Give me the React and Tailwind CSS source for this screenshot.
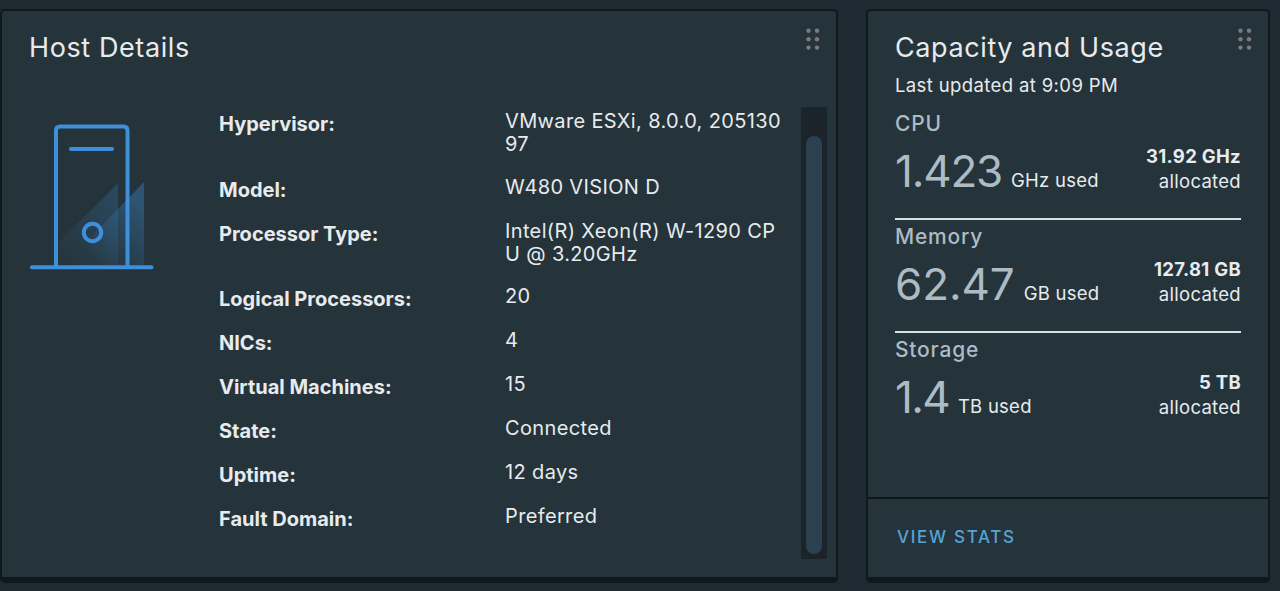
import clsx from 'clsx';

const details = [
  { label: 'Hypervisor:', lines: ['VMware ESXi, 8.0.0, 205130', '97'] },
  { label: 'Model:', lines: ['W480 VISION D'] },
  { label: 'Processor Type:', lines: ['Intel(R) Xeon(R) W-1290 CP', 'U @ 3.20GHz'] },
  { label: 'Logical Processors:', lines: ['20'] },
  { label: 'NICs:', lines: ['4'] },
  { label: 'Virtual Machines:', lines: ['15'] },
  { label: 'State:', lines: ['Connected'] },
  { label: 'Uptime:', lines: ['12 days'] },
  { label: 'Fault Domain:', lines: ['Preferred'] },
];

const usage = [
  { name: 'CPU', used: '1.423', unit: 'GHz', total: '31.92 GHz', tracking: 'tracking-[-1.2px]' },
  { name: 'Memory', used: '62.47', unit: 'GB', total: '127.81 GB', tracking: 'tracking-[-0.1px]' },
  { name: 'Storage', used: '1.4', unit: 'TB', total: '5 TB', tracking: 'tracking-[-1.7px]' },
];

function Card({ className, children }) {
  return (
    <section
      className={clsx(
        'flex h-[574px] flex-col rounded-[5px] border-2 border-b-[6px] border-[#11181c] bg-[#25333a]',
        className
      )}
    >
      {children}
    </section>
  );
}

function CardHeader({ title }) {
  return (
    <header className="flex h-[54px] justify-between pt-[17px] pr-[16px] pl-[27px]">
      <h2 className="pt-0.5 text-[27px] leading-9 tracking-[0.6px]">{title}</h2>
      <DragHandle />
    </header>
  );
}

function DragHandle() {
  return (
    <svg width="14" height="22" viewBox="0 0 14 22" fill="#7b7b7b" className="shrink-0">
      {[2.5, 11].map((x) =>
        [2.8, 11.2, 19.6].map((y) => <circle key={`${x}-${y}`} cx={x} cy={y} r="2.2" />)
      )}
    </svg>
  );
}

function HostIcon() {
  return (
    <svg width="126" height="150" viewBox="0 0 126 150" fill="none" className="shrink-0">
      <defs>
        <linearGradient id="beamBack" x1="88" y1="80" x2="25" y2="146" gradientUnits="userSpaceOnUse">
          <stop stopColor="#3b8fd8" stopOpacity="0.22" />
          <stop offset="1" stopColor="#3b8fd8" stopOpacity="0" />
        </linearGradient>
        <linearGradient id="beamFront" x1="115" y1="88" x2="66" y2="138" gradientUnits="userSpaceOnUse">
          <stop stopColor="#3b8fd8" stopOpacity="0.36" />
          <stop offset="1" stopColor="#3b8fd8" stopOpacity="0" />
        </linearGradient>
      </defs>
      <path d="M89 63V147H5Z" fill="url(#beamBack)" />
      <path d="M115 62V147H33Z" fill="url(#beamFront)" />
      <g stroke="#3d90d9" strokeWidth="4" strokeLinecap="round">
        <path d="M27 147V10.500q0-4 4-4h63.500q4 0 4 4v136.500" />
        <path d="M42 29H83" />
        <path d="M3 147.300H122.500" />
        <circle cx="63.500" cy="112.500" r="8.700" />
      </g>
    </svg>
  );
}

function HostDetails() {
  return (
    <Card className="w-[837.5px] shrink-0">
      <CardHeader title="Host Details" />
      <div className="mt-[42px] flex pl-[27px]">
        <div className="w-[190px] pt-[13px]">
          <HostIcon />
        </div>
        <dl className="w-[582px] pt-[3px] text-[20px] leading-[23px]">
          {details.map(({ label, lines }) => (
            <div key={label} className={clsx('flex', lines.length > 1 ? 'h-[65.8px]' : 'h-[43.9px]')}>
              <dt className="w-[286px] pt-[3px] font-bold">{label}</dt>
              <dd className="tracking-[0.36px]">
                {lines.map((line) => (
                  <div key={line} className="whitespace-nowrap">{line}</div>
                ))}
              </dd>
            </div>
          ))}
        </dl>
        <div className="h-[452px] w-[26px] bg-[#1b242b] px-[5px] pt-[28.5px] pb-[5px]">
          <div className="h-full rounded-full bg-[#2d4050]" />
        </div>
      </div>
    </Card>
  );
}

function UsageBlock({ name, used, unit, total, tracking }) {
  return (
    <div className="h-[113px] border-b-2 border-[#d9dfe1] text-[18.5px] last:border-b-0">
      <h3 className="pt-[3px] text-[21px] leading-7 font-medium tracking-[0.8px] text-[#adbbc4]">
        {name}
      </h3>
      <div className="flex items-end justify-between">
        <p className="flex items-baseline gap-[9px]">
          <span className={clsx('text-[44px] leading-[66px] text-[#adbbc4]', tracking)}>
            {used}
          </span>
          <span className="tracking-[0.25px]">{unit} used</span>
        </p>
        <p className="pb-[10px] text-right leading-[25px] tracking-[0.3px]">
          <strong className="block font-bold">{total}</strong>
          allocated
        </p>
      </div>
    </div>
  );
}

function CapacityUsage() {
  return (
    <Card className="w-[404px] shrink-0">
      <CardHeader title="Capacity and Usage" />
      <p className="pt-[7px] pl-[27px] text-[18.5px] leading-[26px] tracking-[0.38px]">
        Last updated at 9:09 PM
      </p>
      <div className="grow pt-[9px] pr-[27px] pl-[27px]">
        {usage.map((item) => (
          <UsageBlock key={item.name} {...item} />
        ))}
      </div>
      <footer className="h-[80px] border-t-2 border-[#11181c] pt-[26px] pl-[29px]">
        <button className="text-[17px] leading-6 font-medium tracking-[1.7px] text-[#57a3d3]">
          VIEW STATS
        </button>
      </footer>
    </Card>
  );
}

export default function App() {
  return (
    <main className="flex h-[591px] w-[1280px] gap-[28.5px] overflow-hidden bg-[#1e2a31] pt-[9px] font-['Inter',sans-serif] text-[#e7ebee]">
      <HostDetails />
      <CapacityUsage />
    </main>
  );
}
